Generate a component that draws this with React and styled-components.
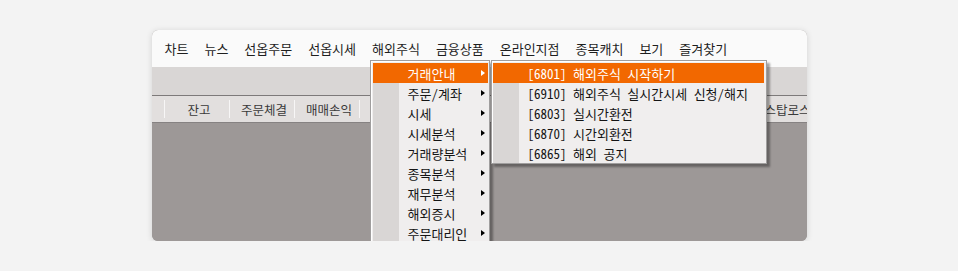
import React from 'react';
import styled, { createGlobalStyle } from 'styled-components';

const GlobalStyle = createGlobalStyle`
  body {
    margin: 0;
    background: #f3f3f3;
    font-family: "Noto Sans CJK KR", "Noto Sans", sans-serif;
  }
`;

const Page = styled.div`
  display: flex;
  justify-content: center;
  padding-top: 30px;
`;

const Window = styled.div`
  position: relative;
  width: 655px;
  height: 211px;
  display: flex;
  flex-direction: column;
  border-radius: 6px;
  overflow: hidden;
  background: #9d9897;
  box-shadow: 0 1px 6px rgba(0, 0, 0, 0.14);
`;

const MenuBar = styled.div`
  height: 37px;
  display: flex;
  align-items: center;
  padding-left: 5px;
  background: #fafafa;
`;

const MenuItem = styled.span`
  padding: 0 8px;
  font-size: 13px;
  color: #1e1e1e;
  white-space: nowrap;
`;

const Toolbar = styled.div`
  height: 28px;
  background: #d9d6d5;
  border-bottom: 1px solid #7d7a7a;
`;

const TabRow = styled.div`
  height: 26px;
  display: flex;
  align-items: center;
  padding-left: 12px;
  background: #e2dfde;
  border-bottom: 1px solid #868282;
  overflow: hidden;
`;

const Divider = styled.span`
  flex: none;
  width: 1px;
  height: 18px;
  background: #f7f6f6;
`;

const Tab = styled.span`
  flex: none;
  width: ${(p) => p.$width || 64}px;
  padding-left: ${(p) => p.$pad ?? 5}px;
  box-sizing: border-box;
  text-align: ${(p) => (p.$left ? 'left' : 'center')};
  font-size: 12.5px;
  color: #3a3a3a;
  white-space: nowrap;
`;

const Content = styled.div`
  flex: 1;
  background: #9d9897;
`;

const Popup = styled.div`
  position: absolute;
  top: 30px;
  left: ${(p) => p.$left}px;
  width: ${(p) => p.$width}px;
  box-sizing: border-box;
  padding: ${(p) => p.$padding};
  border: 1px solid #a09e9e;
  background: #f0eeee;
  box-shadow: inset 1px 1px 0 #ffffff, 3px 3px 2px rgba(0, 0, 0, 0.35);
  font-family: "Noto Sans Mono CJK KR", "Noto Sans CJK KR", sans-serif;
`;

const List = styled.div`
  background: linear-gradient(to right, #d9d6d5 26px, #f0eeee 26px);
`;

const Row = styled.div`
  height: 20px;
  display: flex;
  align-items: center;
  padding-left: 35px;
  padding-right: 3px;
  font-size: 13px;
  white-space: pre;
  color: ${(p) => (p.$active ? '#ffffff' : '#141414')};
  background: ${(p) => (p.$active ? '#f26800' : 'transparent')};
`;

const Label = styled.span`
  flex: 1;
`;

const Arrow = styled.span`
  width: 0;
  height: 0;
  border-top: 3.5px solid transparent;
  border-bottom: 3.5px solid transparent;
  border-left: 4px solid ${(p) => (p.$active ? '#ffffff' : '#000000')};
`;

const menus = ['차트', '뉴스', '선옵주문', '선옵시세', '해외주식', '금융상품', '온라인지점', '종목캐치', '보기', '즐겨찾기'];

// tabs that lie under the open menus carry no visible label
const tabs = ['잔고', '주문체결', '매매손익', '', '', '', '', '', ''];

const categories = ['거래안내', '주문/계좌', '시세', '시세분석', '거래량분석', '종목분석', '재무분석', '해외증시', '주문대리인'];

const screens = [
  '[6801] 해외주식 시작하기',
  '[6910] 해외주식 실시간시세 신청/해지',
  '[6803] 실시간환전',
  '[6870] 시간외환전',
  '[6865] 해외 공지',
];

export default function App() {
  return (
    <>
      <GlobalStyle />
      <Page>
        <Window>
          <MenuBar>
            {menus.map((m) => (
              <MenuItem key={m}>{m}</MenuItem>
            ))}
          </MenuBar>
          <Toolbar />
          <TabRow>
            {tabs.map((t, i) => (
              <React.Fragment key={i}>
                <Divider />
                <Tab>{t}</Tab>
              </React.Fragment>
            ))}
            <Divider />
            <Tab $width={80} $pad={15} $left>스탑로스</Tab>
          </TabRow>
          <Content />

          <Popup $left={218} $width={120} $padding="2px 1px 2px 2px">
            <List>
              {categories.map((c, i) => (
                <Row key={c} $active={i === 0}>
                  <Label>{c}</Label>
                  <Arrow $active={i === 0} />
                </Row>
              ))}
            </List>
          </Popup>

          <Popup $left={339} $width={276} $padding="2px 2px 0 1px">
            <List>
              {screens.map((s, i) => (
                <Row key={s} $active={i === 0}>
                  <Label>{s}</Label>
                </Row>
              ))}
            </List>
          </Popup>
        </Window>
      </Page>
    </>
  );
}
